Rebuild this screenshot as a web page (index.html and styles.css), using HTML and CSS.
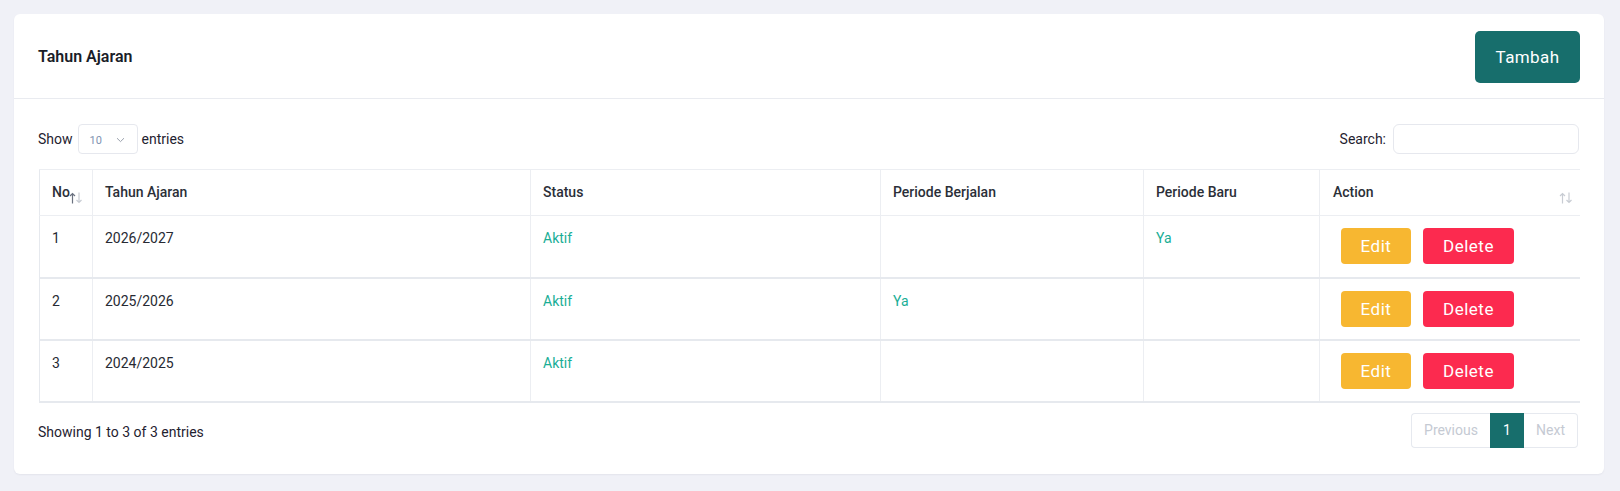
FILE: index.html
```html
<!DOCTYPE html>
<html>
<head>
<meta charset="utf-8">
<link rel="stylesheet" href="styles.css">
</head>
<body>
<div class="card">
  <div class="card-header">
    <div class="card-title">Tahun Ajaran</div>
    <button class="btn btn-primary">Tambah</button>
  </div>
  <div class="card-body">
    <div class="controls">
      <label class="length">Show
        <span class="select"><span>10</span>
          <svg width="9" height="6" viewBox="0 0 9 6"><path d="M1 1.2 L4.5 4.6 L8 1.2" fill="none" stroke="#9aa1ad" stroke-width="1"/></svg>
        </span>
        entries</label>
      <label class="search">Search: <span class="input"></span></label>
    </div>
    <table class="data">
      <colgroup>
        <col style="width:53px"><col style="width:438px"><col style="width:350px"><col style="width:263px"><col style="width:176px"><col style="width:260px">
      </colgroup>
      <thead>
        <tr>
          <th class="sort no">No<span class="icon">
            <svg width="14" height="12" viewBox="0 0 14 12"><g fill="none" stroke-width="1.2"><path d="M3.5 11.5 V1.5 M1 4 L3.5 1.5 L6 4" stroke="#6b7280"/><path d="M10 0.5 V10.5 M7.5 8 L10 10.5 L12.5 8" stroke="#c8ccd3"/></g></svg>
          </span></th>
          <th>Tahun Ajaran</th>
          <th>Status</th>
          <th>Periode Berjalan</th>
          <th>Periode Baru</th>
          <th class="sort act">Action<span class="icon">
            <svg width="14" height="12" viewBox="0 0 14 12"><g fill="none" stroke-width="1.2" stroke="#c8ccd3"><path d="M3.5 11.5 V1.5 M1 4 L3.5 1.5 L6 4"/><path d="M10 0.5 V10.5 M7.5 8 L10 10.5 L12.5 8"/></g></svg>
          </span></th>
        </tr>
      </thead>
      <tbody>
        <tr>
          <td>1</td><td>2026/2027</td><td class="green">Aktif</td><td></td><td class="green">Ya</td>
          <td class="actions"><button class="btn btn-edit">Edit</button><button class="btn btn-del">Delete</button></td>
        </tr>
        <tr>
          <td>2</td><td>2025/2026</td><td class="green">Aktif</td><td class="green">Ya</td><td></td>
          <td class="actions"><button class="btn btn-edit">Edit</button><button class="btn btn-del">Delete</button></td>
        </tr>
        <tr>
          <td>3</td><td>2024/2025</td><td class="green">Aktif</td><td></td><td></td>
          <td class="actions"><button class="btn btn-edit">Edit</button><button class="btn btn-del">Delete</button></td>
        </tr>
      </tbody>
    </table>
    <div class="footer">
      <div class="info">Showing 1 to 3 of 3 entries</div>
      <div class="pager">
        <span class="pg prev">Previous</span><span class="pg active">1</span><span class="pg next">Next</span>
      </div>
    </div>
  </div>
</div>
</body>
</html>
```

FILE: styles.css
```css
* { box-sizing: border-box; }
html, body { margin: 0; }
body {
  background: #f0f1f7;
  padding: 14px 16px 14px 14px;
  font-family: Roboto, "Liberation Sans", Arial, sans-serif;
  font-size: 14px;
  color: #212529;
}
.card {
  width: 1590px;
  background: #fff;
  border-radius: 6px;
  box-shadow: 0 1px 2px rgba(30, 40, 70, 0.06);
}
.card-header {
  height: 85px;
  display: flex;
  align-items: center;
  justify-content: space-between;
  padding: 0 24px;
  border-bottom: 1px solid #e9ebf0;
}
.card-title {
  font-size: 16px;
  font-weight: 600;
  color: #1a1d29;
}
.btn {
  border: none;
  color: #fff;
  font-family: Roboto, "Liberation Sans", Arial, sans-serif;
  cursor: pointer;
}
.btn-primary {
  background: #176e6c;
  height: 52px;
  width: 105px;
  border-radius: 5px;
  font-size: 17px;
  letter-spacing: 0.4px;
  margin-top: 1px;
}
.card-body {
  padding: 25px 25px 26px 24px;
}
.controls {
  display: flex;
  justify-content: space-between;
  align-items: center;
  height: 30px;
}
.length, .search {
  display: flex;
  align-items: center;
  color: #1f2230;
  font-size: 14px;
}
.select {
  display: inline-flex;
  align-items: center;
  justify-content: space-between;
  width: 60px;
  height: 30px;
  margin: 0 4px 0 5px;
  padding: 2px 12px 0 11px;
  border: 1px solid #e6e8ee;
  border-radius: 4px;
  font-size: 11px;
  color: #8193b2;
}
.input {
  display: inline-block;
  width: 186px;
  height: 30px;
  margin-left: 7px;
  border: 1px solid #e6e8ee;
  border-radius: 6px;
}
table.data {
  margin-top: 15px;
  width: 1540px;
  margin-left: 1px;
  table-layout: fixed;
  border-collapse: collapse;
  border-left: 1px solid #e6e9ee;
  border-top: 1px solid #eceef2;
}
.data th, .data td {
  text-align: left;
  vertical-align: top;
  padding: 12px 12px;
  line-height: 20px;
  border-right: 1px solid #eceef2;
}
.data th:last-child, .data td:last-child { border-right: none; }
.data th {
  font-weight: 500;
  color: #2b2f38;
  border-bottom: 1px solid #eceef2;
  position: relative;
  height: 46px;
}
.data td {
  border-bottom: 2px solid #e6e9ee;
  height: 62px;
  color: #272a33;
}
.data td.green { color: #19ae96; }
.data td.actions { padding: 12px 12px 12px 21px; }
.data th.act { padding-left: 13px; }
.sort .icon {
  position: absolute;
  top: 22px;
  line-height: 0;
}
.no .icon { right: 9px; }
.act .icon { right: 7px; }
.btn-edit, .btn-del {
  height: 36px;
  border-radius: 4px;
  font-size: 17px;
  letter-spacing: 0.5px;
  padding: 0 19px;
  vertical-align: top;
}
.btn-edit { background: #f7b731; width: 70px; }
.btn-del { background: #fc2a4f; width: 91px; margin-left: 12px; }
.footer {
  display: flex;
  justify-content: space-between;
  align-items: center;
  margin-top: 10px;
  height: 35px;
}
.info {
  color: #1f2230;
  font-size: 14px;
  padding-top: 3px;
}
.pager {
  display: flex;
  height: 35px;
  margin-right: 1px;
}
.pg {
  display: flex;
  align-items: center;
  justify-content: center;
  height: 35px;
  font-size: 14px;
  color: #c5cad3;
  border: 1px solid #e6e9ef;
}
.prev { width: 79px; border-radius: 4px 0 0 4px; border-right: none; }
.active { width: 34px; background: #176e6c; color: #fff; border-color: #176e6c; }
.next { width: 54px; border-radius: 0 4px 4px 0; border-left: none; }
```
